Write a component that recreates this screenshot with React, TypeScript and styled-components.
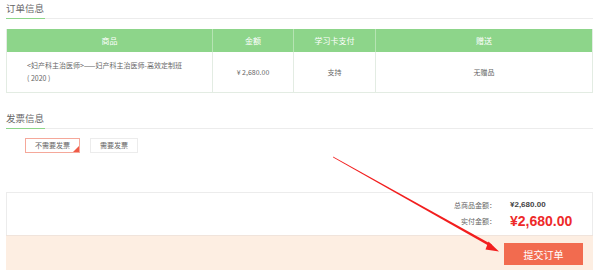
import React from "react";
import styled, { createGlobalStyle } from "styled-components";

const Global = createGlobalStyle`
  html, body { margin: 0; padding: 0; background: #fff; }
  body { font-family: "Noto Sans CJK SC", "Noto Sans", "Liberation Sans", sans-serif; color: #666; }
  * { box-sizing: border-box; }
`;

const Page = styled.div`
  position: relative;
  width: 597px;
  height: 270px;
  overflow: hidden;
  padding: 0 4px 0 6px;
  display: flex;
  flex-direction: column;
`;

const SectionTitle = styled.div<{ $mt?: number }>`
  position: relative;
  height: 19px;
  margin-top: ${(p) => p.$mt ?? 0}px;
  border-bottom: 1px solid #ececec;
  font-size: 9.5px;
  line-height: 17px;
  color: #666;
  &::after {
    content: "";
    position: absolute;
    left: 0;
    bottom: -1px;
    width: 39px;
    height: 1.5px;
    background: #8dd58a;
  }
`;

const Table = styled.div`
  margin-top: 10px;
  display: grid;
  grid-template-columns: 206px 81px 82px 1fr;
  border: 1px solid #e3ece3;
  border-top: none;
`;

const HeadCell = styled.div<{ $last?: boolean }>`
  height: 23px;
  background: #8dd58a;
  color: #fff;
  font-size: 8px;
  display: flex;
  align-items: center;
  justify-content: center;
  border-right: ${(p) => (p.$last ? "none" : "1px solid #b6e4b3")};
`;

const BodyCell = styled.div<{ $left?: boolean; $last?: boolean }>`
  height: 40px;
  font-size: 7px;
  line-height: 13px;
  color: #666;
  display: flex;
  align-items: center;
  justify-content: ${(p) => (p.$left ? "flex-start" : "center")};
  padding: ${(p) => (p.$left ? "0 20px" : "0")};
  border-right: ${(p) => (p.$last ? "none" : "1px solid #e3ece3")};
`;

const Options = styled.div`
  display: flex;
  gap: 10px;
  margin: 9px 0 0 19px;
`;

const Option = styled.div<{ $active?: boolean }>`
  position: relative;
  height: 15px;
  width: ${(p) => (p.$active ? "55px" : "48px")};
  border: 1px solid ${(p) => (p.$active ? "#f5a89a" : "#ececec")};
  font-size: 7px;
  line-height: 13px;
  color: #666;
  text-align: center;
  &::after {
    content: "";
    display: ${(p) => (p.$active ? "block" : "none")};
    position: absolute;
    right: 0;
    bottom: 0;
    border-style: solid;
    border-width: 0 0 6px 6px;
    border-color: transparent transparent #ef5a47 transparent;
  }
`;

const Summary = styled.div`
  margin-top: 39px;
  height: 43px;
  border: 1px solid #ececec;
  border-bottom: none;
  display: grid;
  grid-template-columns: 1fr 62px;
  align-content: center;
  row-gap: 3px;
  padding-right: 20px;
`;

const Label = styled.div`
  font-size: 7px;
  color: #666;
  padding-right: 14px;
  display: flex;
  align-items: center;
  justify-content: flex-end;
`;

const Value = styled.div<{ $big?: boolean }>`
  font-family: "Liberation Sans", "Noto Sans CJK SC", sans-serif;
  font-size: ${(p) => (p.$big ? "14px" : "8px")};
  font-weight: bold;
  color: ${(p) => (p.$big ? "#ee2a2a" : "#444")};
  white-space: nowrap;
  line-height: ${(p) => (p.$big ? "16px" : "11px")};
`;

const Footer = styled.div`
  flex: 1;
  background: #fdeee2;
  border-top: 1px solid #f0e4dc;
  display: flex;
  justify-content: flex-end;
  align-items: flex-start;
  padding: 7px 10px 0 0;
`;

const SubmitButton = styled.button`
  width: 79px;
  height: 22px;
  border: none;
  background: #f26b4f;
  color: #fff;
  font-family: "Noto Sans CJK SC", sans-serif;
  font-size: 10px;
  cursor: pointer;
`;

const Arrow = styled.svg`
  position: absolute;
  left: 0;
  top: 0;
  pointer-events: none;
`;

export default function App() {
  return (
    <>
      <Global />
      <Page>
        <SectionTitle>订单信息</SectionTitle>
        <Table>
          <HeadCell>商品</HeadCell>
          <HeadCell>金额</HeadCell>
          <HeadCell>学习卡支付</HeadCell>
          <HeadCell $last>赠送</HeadCell>
          <BodyCell $left>
            &lt;妇产科主治医师&gt;——妇产科主治医师-高效定制班
            <br />( 2020 )
          </BodyCell>
          <BodyCell>¥ 2,680.00</BodyCell>
          <BodyCell>支持</BodyCell>
          <BodyCell $last>无赠品</BodyCell>
        </Table>
        <SectionTitle $mt={17}>发票信息</SectionTitle>
        <Options>
          <Option $active>不需要发票</Option>
          <Option>需要发票</Option>
        </Options>
        <Summary>
          <Label>总商品金额：</Label>
          <Value>¥2,680.00</Value>
          <Label>实付金额：</Label>
          <Value $big>¥2,680.00</Value>
        </Summary>
        <Footer>
          <SubmitButton>提交订单</SubmitButton>
        </Footer>
        <Arrow width="597" height="270" viewBox="0 0 597 270">
          <polygon points="333,156.6 333.2,157.4 490.5,246.8 491.8,244.4" fill="#f21e1e" />
          <polygon points="488.5,241.5 499,251.5 485.5,249.5" fill="#f21e1e" />
        </Arrow>
      </Page>
    </>
  );
}
